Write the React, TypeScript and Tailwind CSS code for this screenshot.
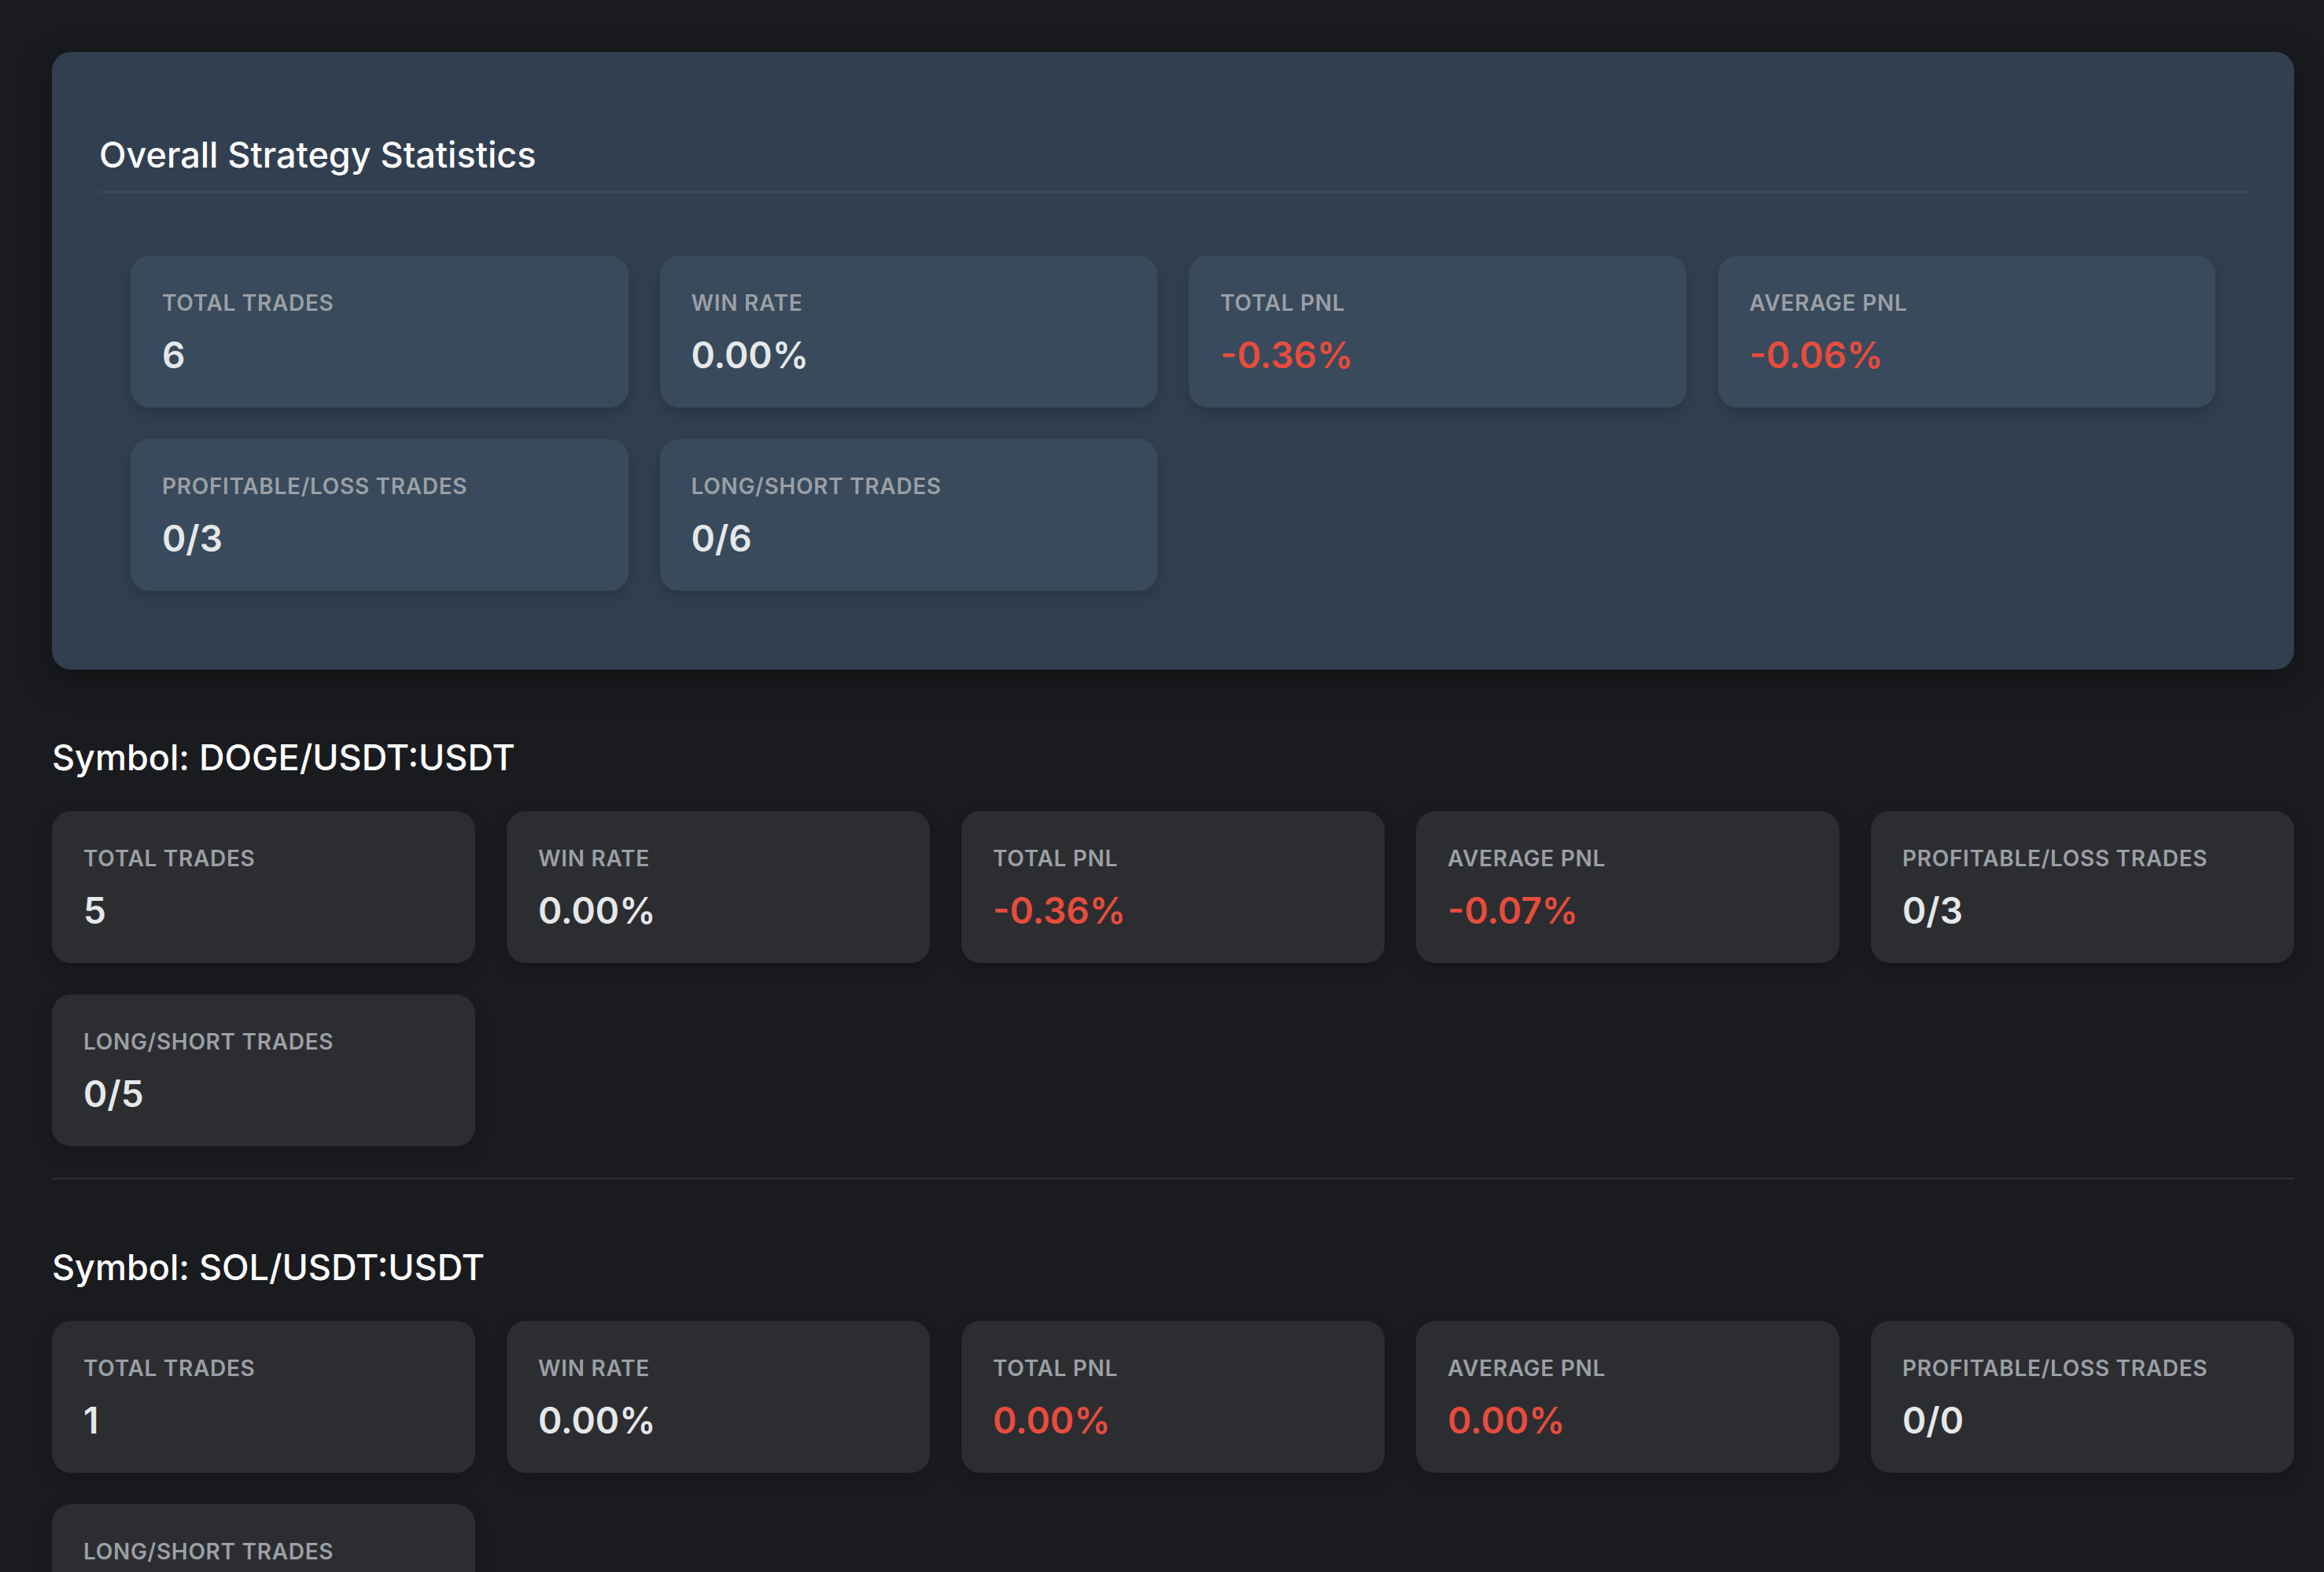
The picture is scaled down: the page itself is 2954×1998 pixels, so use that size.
import React from "react";

type Stat = {
  label: string;
  value: string;
  pnl?: boolean;
};

const overall: Stat[] = [
  { label: "Total Trades", value: "6" },
  { label: "Win Rate", value: "0.00%" },
  { label: "Total PNL", value: "-0.36%", pnl: true },
  { label: "Average PNL", value: "-0.06%", pnl: true },
  { label: "Profitable/Loss Trades", value: "0/3" },
  { label: "Long/Short Trades", value: "0/6" },
];

const symbols: { name: string; stats: Stat[] }[] = [
  {
    name: "DOGE/USDT:USDT",
    stats: [
      { label: "Total Trades", value: "5" },
      { label: "Win Rate", value: "0.00%" },
      { label: "Total PNL", value: "-0.36%", pnl: true },
      { label: "Average PNL", value: "-0.07%", pnl: true },
      { label: "Profitable/Loss Trades", value: "0/3" },
      { label: "Long/Short Trades", value: "0/5" },
    ],
  },
  {
    name: "SOL/USDT:USDT",
    stats: [
      { label: "Total Trades", value: "1" },
      { label: "Win Rate", value: "0.00%" },
      { label: "Total PNL", value: "0.00%", pnl: true },
      { label: "Average PNL", value: "0.00%", pnl: true },
      { label: "Profitable/Loss Trades", value: "0/0" },
      { label: "Long/Short Trades", value: "0/1" },
    ],
  },
];

const StatCard: React.FC<{ stat: Stat; dark?: boolean }> = ({ stat, dark }) => {
  return (
    <div
      className={
        dark
          ? "rounded-[24px] bg-[#2c2d31] px-10 pt-10 pb-9 shadow-[0_8px_20px_rgba(0,0,0,0.18)]"
          : "rounded-[24px] bg-[#384a5c] px-10 pt-10 pb-9 shadow-[0_8px_20px_rgba(0,0,0,0.18)]"
      }
    >
      <p className="text-[28px] leading-[40px] font-semibold uppercase tracking-wide text-[#9c9fa5]">
        {stat.label}
      </p>
      <p
        className={
          stat.pnl
            ? "mt-4 text-[46px] leading-[61px] font-semibold text-[#e74c3c]"
            : "mt-4 text-[46px] leading-[61px] font-semibold text-[#e6e7e9]"
        }
      >
        {stat.value}
      </p>
    </div>
  );
};

const App: React.FC = () => {
  return (
    <div className="min-h-screen bg-[#1a1b1e] pl-[66px] pr-[38px] pt-[66px] pb-[66px] font-['Inter','Noto_Sans',sans-serif] text-white">
      {/* OVERALL */}
      <section className="rounded-[24px] bg-[#323f50] px-[60px] pt-[100px] pb-[60px] shadow-[0_12px_40px_rgba(0,0,0,0.35)]">
        <h2 className="border-b-2 border-[#3b4b5e] pb-4 text-[45px] leading-[61px] font-medium text-white">
          Overall Strategy Statistics
        </h2>
        <div className="mt-10 grid grid-cols-4 gap-10 p-10">
          {overall.map((s) => (
            <StatCard key={s.label} stat={s} />
          ))}
        </div>
      </section>

      {/* PER SYMBOL */}
      {symbols.map((sym) => (
        <section
          key={sym.name}
          className="border-b-2 border-[#2e2f33] pt-[81px] pb-10"
        >
          <h3 className="mb-[38px] text-[45px] leading-[61px] font-medium text-white">
            Symbol: {sym.name}
          </h3>
          <div className="grid grid-cols-5 gap-10">
            {sym.stats.map((s) => (
              <StatCard key={s.label} stat={s} dark />
            ))}
          </div>
        </section>
      ))}
    </div>
  );
};

export default App;
